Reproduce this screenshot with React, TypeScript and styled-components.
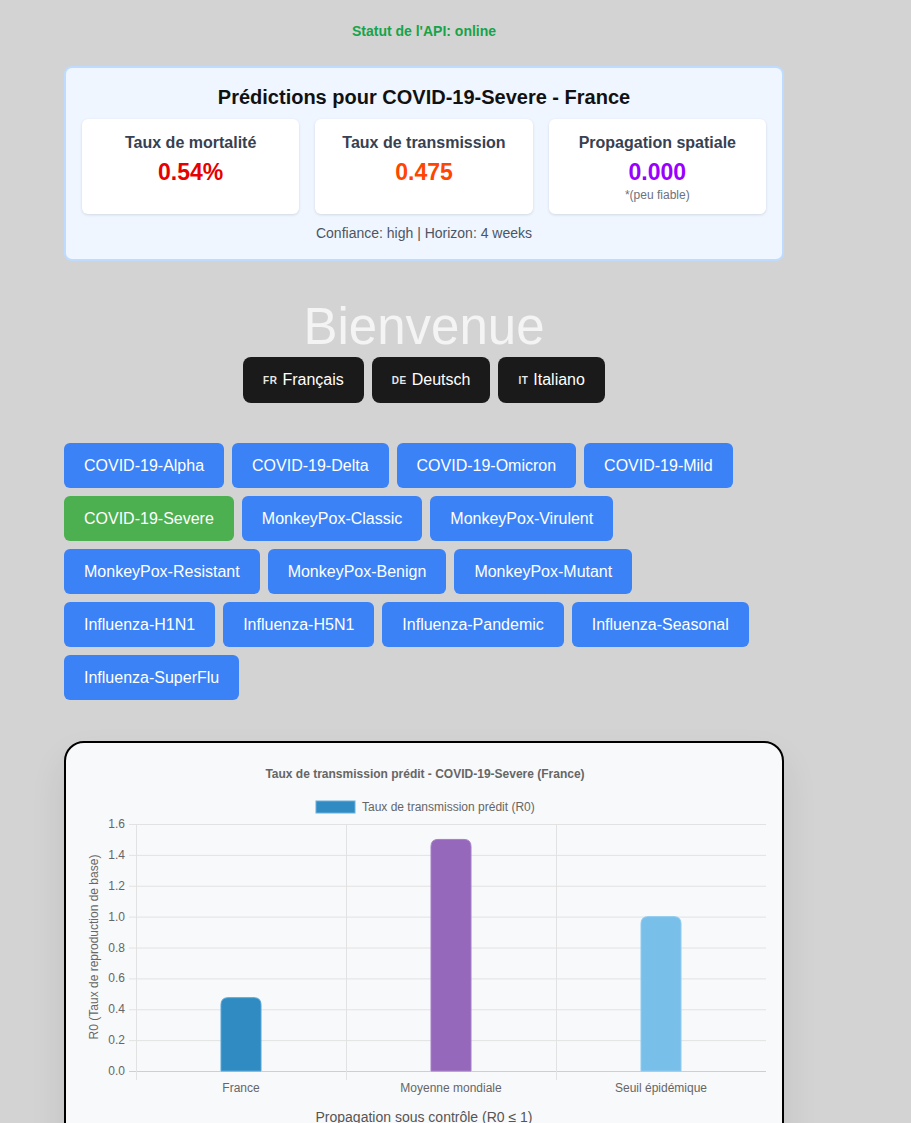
import styled, { createGlobalStyle } from 'styled-components'

const GlobalStyles = createGlobalStyle`
  body {
    margin: 0;
    background: #d3d3d3;
    font-family: "Liberation Sans", Arial, sans-serif;
  }
`

const Page = styled.div`
  width: 720px;
  padding: 23px 0 0 64px;
  display: flex;
  flex-direction: column;
`

const Status = styled.p`
  margin: 0;
  text-align: center;
  font-size: 14px;
  line-height: 16px;
  font-weight: bold;
  color: #16a34a;
`

const PredictionPanel = styled.section`
  margin-top: 27px;
  background: #eff6ff;
  border: 2px solid #bfdbfe;
  border-radius: 8px;
  padding: 17px 16px 18px;
  text-align: center;
`

const PanelTitle = styled.h2`
  margin: 0 0 10px;
  font-size: 20px;
  line-height: 24px;
  color: #111;
`

const StatGrid = styled.div`
  display: grid;
  grid-template-columns: repeat(3, 1fr);
  gap: 16px;
`

const StatCard = styled.div`
  background: #fff;
  border-radius: 6px;
  box-shadow: 0 1px 3px rgba(0, 0, 0, 0.12);
  padding: 14px 10px 12px;
`

const StatLabel = styled.div`
  font-size: 16px;
  line-height: 19px;
  font-weight: bold;
  color: #374151;
`

const StatValue = styled.div<{ $color: string }>`
  margin-top: 6px;
  font-size: 23px;
  line-height: 28px;
  font-weight: bold;
  color: ${({ $color }) => $color};
`

const StatNote = styled.div`
  margin-top: 2px;
  font-size: 12px;
  line-height: 14px;
  color: #6b7280;
`

const PanelFooter = styled.p`
  margin: 11px 0 0;
  font-size: 14px;
  line-height: 16px;
  color: #4b5563;
`

const Welcome = styled.h1`
  margin: 41px 0 0;
  text-align: center;
  font-size: 51px;
  line-height: 50px;
  font-weight: normal;
  color: #f4f4f4;
`

const LangRow = styled.div`
  margin-top: 5px;
  display: flex;
  justify-content: center;
  gap: 8px;
`

const LangButton = styled.button`
  height: 46px;
  padding: 0 20px;
  border: none;
  border-radius: 8px;
  background: #1a1a1a;
  color: #fff;
  font-family: inherit;
  font-size: 16px;
  display: flex;
  align-items: center;
  gap: 5px;
`

const Flag = styled.span`
  font-size: 10px;
  font-weight: bold;
  letter-spacing: 0.5px;
  color: #e8e8e8;
`

const DiseaseList = styled.div`
  margin-top: 40px;
  display: flex;
  flex-wrap: wrap;
  gap: 8px;
`

const DiseaseButton = styled.button<{ $active?: boolean }>`
  height: 45px;
  padding: 0 20px;
  border: none;
  border-radius: 6px;
  background: ${({ $active }) => ($active ? '#4caf50' : '#3b82f6')};
  color: #fff;
  font-family: inherit;
  font-size: 16px;
`

const ChartCard = styled.section`
  margin-top: 41px;
  background: #f8f9fb;
  border: 2px solid #000;
  border-radius: 20px;
  box-shadow: 0 18px 36px rgba(0, 0, 0, 0.09);
  display: flex;
  flex-direction: column;
  align-items: center;
  height: 420px;
`

const ChartNote = styled.p`
  margin: 6px 0 0;
  font-size: 14px;
  line-height: 16px;
  color: #555;
`

const diseases = [
  'COVID-19-Alpha',
  'COVID-19-Delta',
  'COVID-19-Omicron',
  'COVID-19-Mild',
  'COVID-19-Severe',
  'MonkeyPox-Classic',
  'MonkeyPox-Virulent',
  'MonkeyPox-Resistant',
  'MonkeyPox-Benign',
  'MonkeyPox-Mutant',
  'Influenza-H1N1',
  'Influenza-H5N1',
  'Influenza-Pandemic',
  'Influenza-Seasonal',
  'Influenza-SuperFlu',
]

// chart coordinates are in page pixels, shifted to the card's inner origin
const OX = 66
const OY = 743
const left = 135 - OX
const right = 765 - OX
const top = 824 - OY
const bottom = 1071 - OY
const maxY = 1.6
const yScale = (v: number) => bottom - (v / maxY) * (bottom - top)

const bars = [
  { label: 'France', value: 0.475, color: '#2f8bc1', stroke: '#5aa6d6' },
  { label: 'Moyenne mondiale', value: 1.5, color: '#9568bb', stroke: '#a57fc8' },
  { label: 'Seuil épidémique', value: 1.0, color: '#78bfea', stroke: '#8ecbef' },
]

function Chart() {
  const catW = (right - left) / bars.length
  const ticks = [0, 0.2, 0.4, 0.6, 0.8, 1.0, 1.2, 1.4, 1.6]
  const text = { fontFamily: '"Liberation Sans", Arial, sans-serif', fill: '#666' }
  return (
    <svg width={715} height={360} style={{ display: 'block' }}>
      <text x={424 - OX} y={778 - OY} textAnchor="middle" fontSize={12} fontWeight="bold" {...text}>
        Taux de transmission prédit - COVID-19-Severe (France)
      </text>
      <rect x={315 - OX} y={801 - OY} width={39} height={12} fill="#2f8bc1" stroke="#6bb0dc" strokeWidth={1} />
      <text x={361 - OX} y={811 - OY} fontSize={12} {...text}>
        Taux de transmission prédit (R0)
      </text>

      {ticks.map((t) => (
        <g key={t}>
          <line x1={left - 7} x2={right} y1={yScale(t) + 0.5} y2={yScale(t) + 0.5} stroke={t === 0 ? '#cfcfcf' : '#e2e2e2'} />
          <text x={124 - OX} y={yScale(t) + 4} textAnchor="end" fontSize={12} {...text}>
            {t.toFixed(1)}
          </text>
        </g>
      ))}
      {[0, 1, 2].map((i) => (
        <line key={i} x1={left + i * catW + 0.5} x2={left + i * catW + 0.5} y1={top} y2={bottom + 9} stroke="#e2e2e2" />
      ))}

      {bars.map((b, i) => {
        const cx = left + catW * (i + 0.5)
        const y = yScale(b.value)
        const w = 40
        const r = 7
        const x0 = cx - w / 2
        const d = `M${x0},${bottom} V${y + r} Q${x0},${y} ${x0 + r},${y} H${x0 + w - r} Q${x0 + w},${y} ${x0 + w},${y + r} V${bottom} Z`
        return (
          <g key={b.label}>
            <path d={d} fill={b.color} stroke={b.stroke} strokeWidth={1} />
            <text x={cx} y={1092 - OY} textAnchor="middle" fontSize={12} {...text}>
              {b.label}
            </text>
          </g>
        )
      })}

      <text
        transform={`translate(${97 - OX}, ${947 - OY}) rotate(-90)`}
        textAnchor="middle"
        fontSize={12}
        {...text}
      >
        R0 (Taux de reproduction de base)
      </text>
    </svg>
  )
}

function App() {
  return (
    <>
      <GlobalStyles />
      <Page>
        <Status>Statut de l'API: online</Status>

        <PredictionPanel>
          <PanelTitle>Prédictions pour COVID-19-Severe - France</PanelTitle>
          <StatGrid>
            <StatCard>
              <StatLabel>Taux de mortalité</StatLabel>
              <StatValue $color="#e60000">0.54%</StatValue>
            </StatCard>
            <StatCard>
              <StatLabel>Taux de transmission</StatLabel>
              <StatValue $color="#ff4500">0.475</StatValue>
            </StatCard>
            <StatCard>
              <StatLabel>Propagation spatiale</StatLabel>
              <StatValue $color="#9900ff">0.000</StatValue>
              <StatNote>*(peu fiable)</StatNote>
            </StatCard>
          </StatGrid>
          <PanelFooter>Confiance: high | Horizon: 4 weeks</PanelFooter>
        </PredictionPanel>

        <Welcome>Bienvenue</Welcome>
        <LangRow>
          <LangButton><Flag>FR</Flag>Français</LangButton>
          <LangButton><Flag>DE</Flag>Deutsch</LangButton>
          <LangButton><Flag>IT</Flag>Italiano</LangButton>
        </LangRow>

        <DiseaseList>
          {diseases.map((d) => (
            <DiseaseButton key={d} $active={d === 'COVID-19-Severe'}>
              {d}
            </DiseaseButton>
          ))}
        </DiseaseList>

        <ChartCard>
          <Chart />
          <ChartNote>Propagation sous contrôle (R0 ≤ 1)</ChartNote>
        </ChartCard>
      </Page>
    </>
  )
}

export default App
